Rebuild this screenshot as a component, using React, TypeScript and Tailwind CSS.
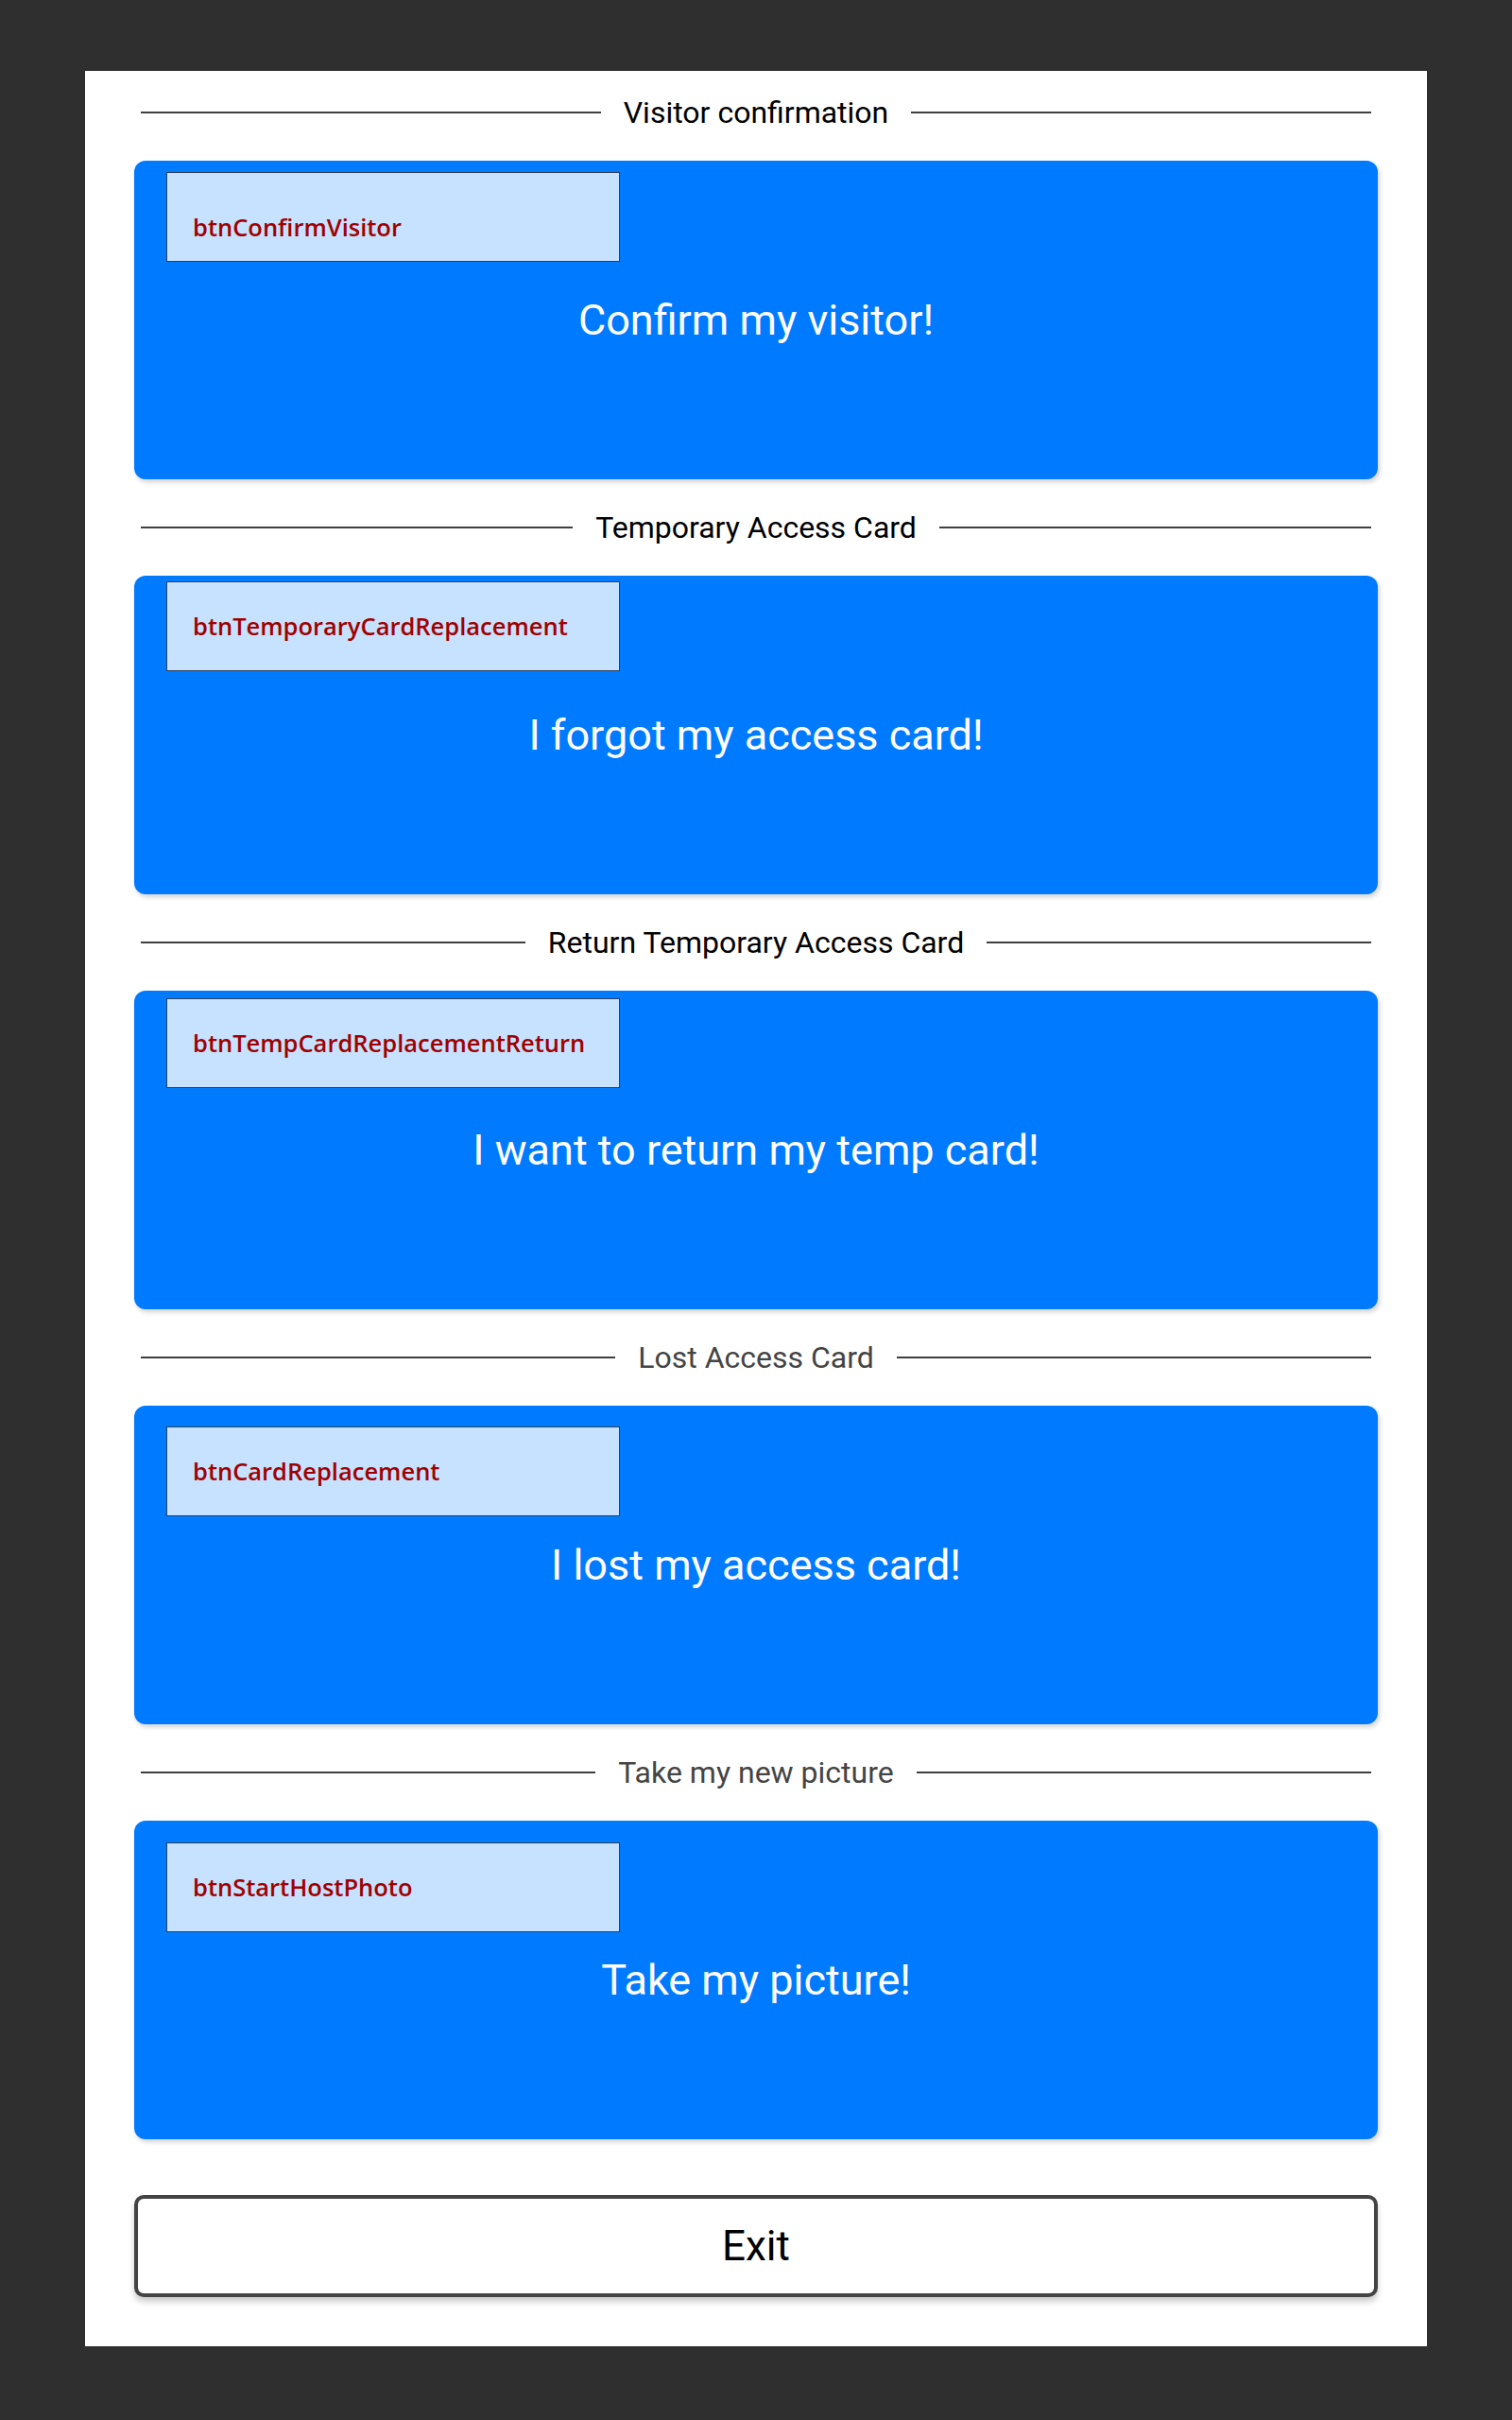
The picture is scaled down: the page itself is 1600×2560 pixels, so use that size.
const sections = [
  {
    title: "Visitor confirmation",
    dim: false,
    id: "btnConfirmVisitor",
    label: "Confirm my visitor!",
    boxTop: "top-[12px]",
    textPad: "pt-[22px]",
  },
  {
    title: "Temporary Access Card",
    dim: false,
    id: "btnTemporaryCardReplacement",
    label: "I forgot my access card!",
    boxTop: "top-[6px]",
    textPad: "pt-0",
  },
  {
    title: "Return Temporary Access Card",
    dim: false,
    id: "btnTempCardReplacementReturn",
    label: "I want to return my temp card!",
    boxTop: "top-[8px]",
    textPad: "pt-0",
  },
  {
    title: "Lost Access Card",
    dim: true,
    id: "btnCardReplacement",
    label: "I lost my access card!",
    boxTop: "top-[22px]",
    textPad: "pt-0",
  },
  {
    title: "Take my new picture",
    dim: true,
    id: "btnStartHostPhoto",
    label: "Take my picture!",
    boxTop: "top-[23px]",
    textPad: "pt-0",
  },
];

const Divider = ({ title, dim }: { title: string; dim: boolean }) => (
  <div className="flex h-[50px] items-center gap-6 px-[7px]">
    <div className="h-[2px] flex-1 bg-[#3f3f3f]" />
    <span
      className={`text-[32px] leading-none ${dim ? "text-[#444]" : "text-black"}`}
    >
      {title}
    </span>
    <div className="h-[2px] flex-1 bg-[#3f3f3f]" />
  </div>
);

const App = () => {
  return (
    <div className="min-h-[2560px] bg-[#2f2f2f] pt-[75px] font-['Roboto',sans-serif]">
      <main className="mx-auto w-[1420px] bg-white px-[52px] pt-[19px] pb-[52px]">
        {sections.map((s) => (
          <section key={s.id} className="mb-[26px]">
            <Divider title={s.title} dim={s.dim} />
            <button className="relative mt-[26px] flex h-[337px] w-full items-center justify-center rounded-xl bg-[#007bff] shadow-[2px_3px_5px_rgba(0,0,0,0.18)]">
              <div
                className={`absolute left-[34px] flex h-[95px] w-[480px] items-center border-[1.5px] border-[#2d3e55] bg-[#c7e2fe] pl-[27px] ${s.boxTop} ${s.textPad}`}
              >
                <span className="font-['Open_Sans',sans-serif] text-[25.5px] leading-none font-semibold text-[#a00000]">
                  {s.id}
                </span>
              </div>
              <span className="text-[45px] leading-none text-white">
                {s.label}
              </span>
            </button>
          </section>
        ))}
        <button className="mt-[59px] flex h-[108px] w-full items-center justify-center rounded-[10px] border-[4px] border-[#444] bg-white text-[44px] text-black shadow-[0_5px_6px_rgba(0,0,0,0.2)]">
          Exit
        </button>
      </main>
    </div>
  );
};

export default App;
